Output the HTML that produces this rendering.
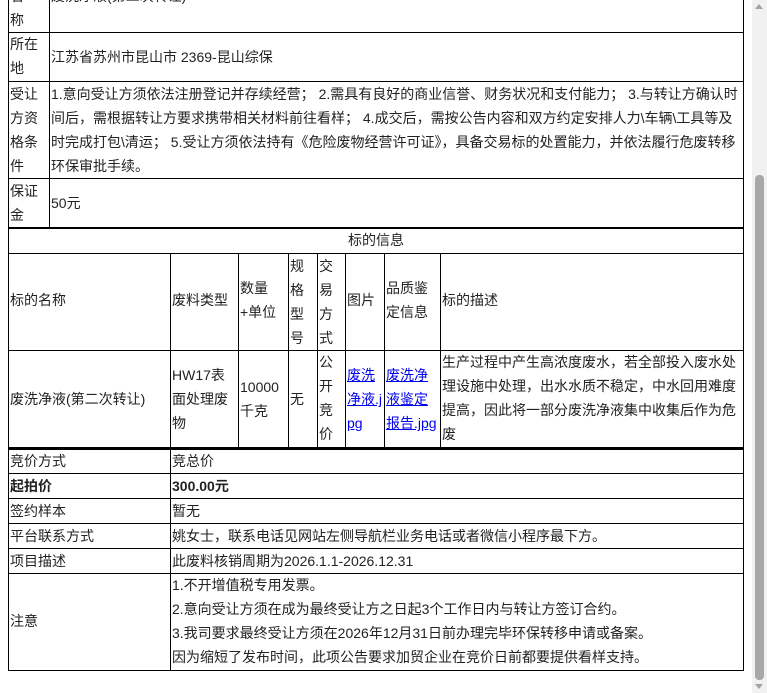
<!DOCTYPE html>
<html><head><meta charset="utf-8"><style>
body{margin:0;width:767px;height:693px;overflow:hidden;background:#fff;position:relative;font-family:"Liberation Sans","Noto Sans CJK SC",sans-serif;font-size:14px;color:#222}
.h{position:absolute;height:1px;background:#000}
.v{position:absolute;width:1px;background:#000}
.t{position:absolute;line-height:24px;white-space:nowrap}
a{color:#00e;text-decoration:underline}
</style></head><body>
<!-- top section lines -->
<div class="v" style="left:8px;top:0;height:450px"></div>
<div class="v" style="left:49px;top:0;height:228px"></div>
<div class="v" style="left:743px;top:0;height:450px"></div>
<div class="h" style="left:8px;top:32px;width:736px"></div>
<div class="h" style="left:8px;top:81px;width:736px"></div>
<div class="h" style="left:8px;top:178px;width:736px"></div>
<div class="h" style="left:8px;top:227px;width:736px;height:2px"></div>
<div class="t" style="left:10px;top:-16px">名<br>称</div>
<div class="t" style="left:51px;top:-16px">废洗净液(第二次转让)</div>
<div class="t" style="left:10px;top:32px">所在<br>地</div>
<div class="t" style="left:51px;top:45px">江苏省苏州市昆山市 2369-昆山综保</div>
<div class="t" style="left:10px;top:82px">受让<br>方资<br>格条<br>件</div>
<div class="t" style="left:51px;top:82px;white-space:normal;width:694px">1.意向受让方须依法注册登记并存续经营； 2.需具有良好的商业信誉、财务状况和支付能力； 3.与转让方确认时间后，需根据转让方要求携带相关材料前往看样； 4.成交后，需按公告内容和双方约定安排人力\车辆\工具等及时完成打包\清运； 5.受让方须依法持有《危险废物经营许可证》，具备交易标的处置能力，并依法履行危废转移环保审批手续。</div>
<div class="t" style="left:10px;top:179px">保证<br>金</div>
<div class="t" style="left:51px;top:191px">50元</div>
<!-- 标的信息 -->
<div class="t" style="left:8px;width:736px;text-align:center;top:228px">标的信息</div>
<div class="h" style="left:8px;top:253px;width:736px"></div>
<div class="v" style="left:170px;top:253px;height:196px"></div>
<div class="v" style="left:238px;top:253px;height:196px"></div>
<div class="v" style="left:288px;top:253px;height:196px"></div>
<div class="v" style="left:317px;top:253px;height:196px"></div>
<div class="v" style="left:345px;top:253px;height:196px"></div>
<div class="v" style="left:384px;top:253px;height:196px"></div>
<div class="v" style="left:440px;top:253px;height:196px"></div>
<div class="h" style="left:8px;top:350px;width:736px"></div>
<div class="t" style="left:10px;top:288px">标的名称</div>
<div class="t" style="left:172px;top:288px">废料类型</div>
<div class="t" style="left:240px;top:276px">数量<br>+单位</div>
<div class="t" style="left:290px;top:254px">规<br>格<br>型<br>号</div>
<div class="t" style="left:319px;top:254px">交<br>易<br>方<br>式</div>
<div class="t" style="left:347px;top:288px">图片</div>
<div class="t" style="left:386px;top:276px">品质鉴<br>定信息</div>
<div class="t" style="left:442px;top:288px">标的描述</div>
<div class="t" style="left:10px;top:387px">废洗净液(第二次转让)</div>
<div class="t" style="left:172px;top:363px">HW17表<br>面处理废<br>物</div>
<div class="t" style="left:240px;top:375px">10000<br>千克</div>
<div class="t" style="left:290px;top:387px">无</div>
<div class="t" style="left:319px;top:350px">公<br>开<br>竞<br>价</div>
<div class="t" style="left:347px;top:363px"><a>废洗</a><br><a>净液.j</a><br><a>pg</a></div>
<div class="t" style="left:386px;top:363px"><a>废洗净</a><br><a>液鉴定</a><br><a>报告.jpg</a></div>
<div class="t" style="left:442px;top:350px;white-space:normal;width:302px">生产过程中产生高浓度废水，若全部投入废水处理设施中处理，出水水质不稳定，中水回用难度提高，因此将一部分废洗净液集中收集后作为危废</div>
<div class="h" style="left:8px;top:447px;width:736px;height:3px"></div>
<!-- bottom table -->
<div class="v" style="left:8px;top:448px;height:223px"></div>
<div class="v" style="left:170px;top:448px;height:223px"></div>
<div class="v" style="left:743px;top:448px;height:223px"></div>
<div class="h" style="left:8px;top:473px;width:736px"></div>
<div class="h" style="left:8px;top:498px;width:736px"></div>
<div class="h" style="left:8px;top:523px;width:736px"></div>
<div class="h" style="left:8px;top:548px;width:736px"></div>
<div class="h" style="left:8px;top:573px;width:736px"></div>
<div class="h" style="left:8px;top:670px;width:736px"></div>
<div class="t" style="left:10px;top:449px">竞价方式</div><div class="t" style="left:172px;top:449px">竞总价</div>
<div class="t" style="left:10px;top:474px;font-weight:bold">起拍价</div><div class="t" style="left:172px;top:474px;font-weight:bold">300.00元</div>
<div class="t" style="left:10px;top:499px">签约样本</div><div class="t" style="left:172px;top:499px">暂无</div>
<div class="t" style="left:10px;top:524px">平台联系方式</div><div class="t" style="left:172px;top:524px">姚女士，联系电话见网站左侧导航栏业务电话或者微信小程序最下方。</div>
<div class="t" style="left:10px;top:549px">项目描述</div><div class="t" style="left:172px;top:549px">此废料核销周期为2026.1.1-2026.12.31</div>
<div class="t" style="left:10px;top:609px">注意</div>
<div class="t" style="left:172px;top:573px">1.不开增值税专用发票。<br>2.意向受让方须在成为最终受让方之日起3个工作日内与转让方签订合约。<br>3.我司要求最终受让方须在2026年12月31日前办理完毕环保转移申请或备案。<br>因为缩短了发布时间，此项公告要求加贸企业在竞价日前都要提供看样支持。</div>
<!-- scrollbar -->
<div style="position:absolute;left:752px;top:0;width:15px;height:693px;background:#f1f1f1"></div>
<div style="position:absolute;left:755px;top:4px;width:0;height:0;border-left:4px solid transparent;border-right:4px solid transparent;border-bottom:5px solid #a3a3a3"></div>
<div style="position:absolute;left:755px;top:684px;width:0;height:0;border-left:4px solid transparent;border-right:4px solid transparent;border-top:5px solid #a3a3a3"></div>
<div style="position:absolute;left:755px;top:175px;width:9px;height:505px;background:#a8a8a8;border-radius:4px"></div>
</body></html>
